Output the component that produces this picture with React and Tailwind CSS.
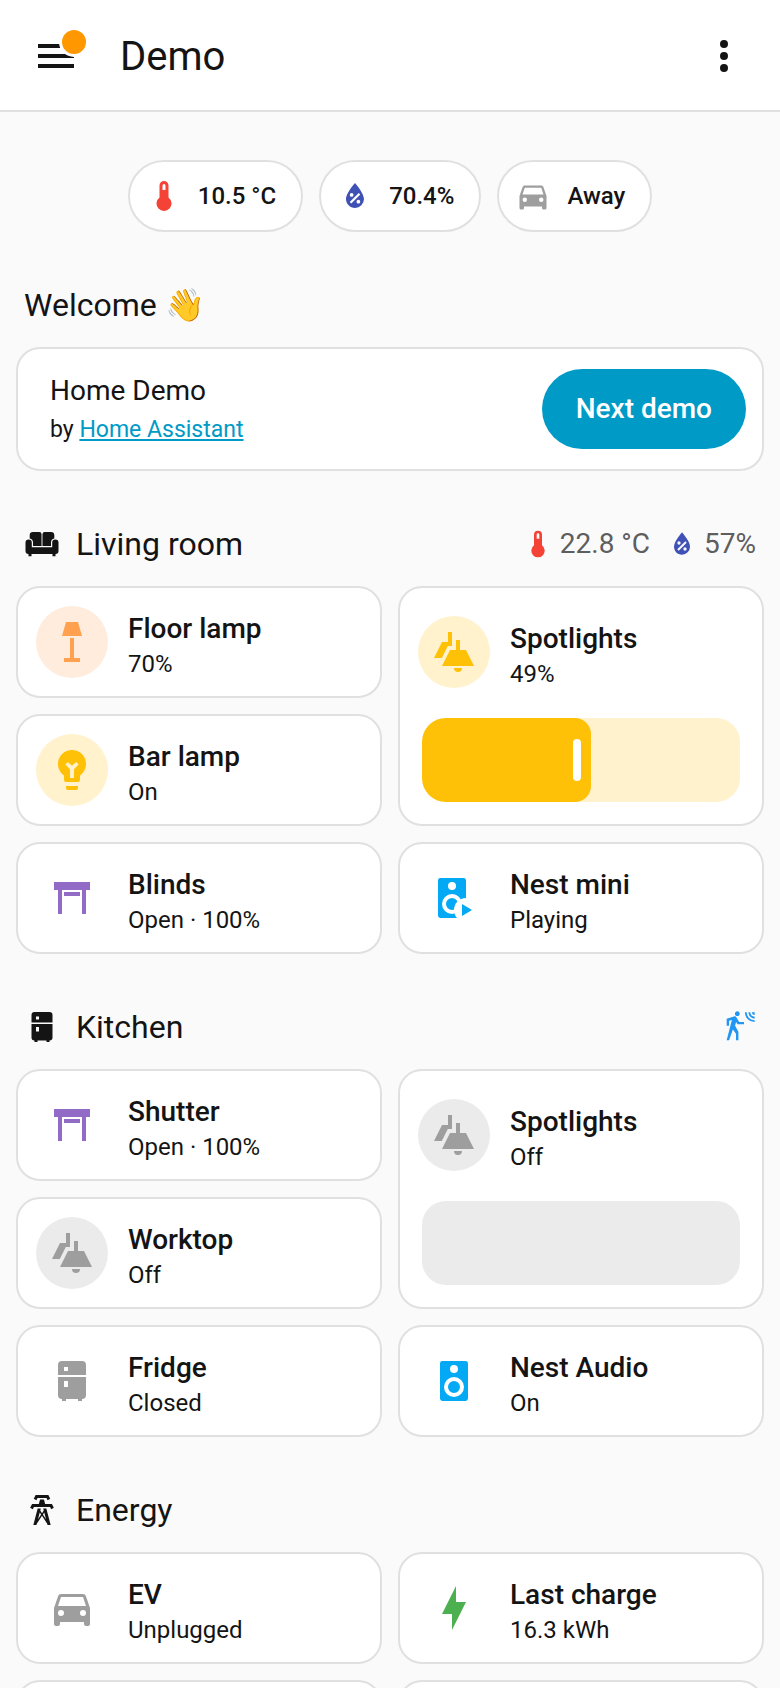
import React, { useState } from 'react'

// 24x24 glyphs, filled with the even-odd rule so inner shapes become holes
const icons = {
  thermometer:
    'M15 13V5A3 3 0 0 0 9 5V13A5 5 0 1 0 15 13M12 4A1 1 0 0 1 13 5V8H11V5A1 1 0 0 1 12 4Z',
  humidity:
    'M12 3.25C12 3.25 6 10 6 14C6 17.32 8.69 20 12 20A6 6 0 0 0 18 14C18 10 12 3.25 12 3.25M14.47 9.97L15.53 11.03L9.53 17.03L8.47 15.97M9.75 10A1.25 1.25 0 0 1 11 11.25A1.25 1.25 0 0 1 9.75 12.5A1.25 1.25 0 0 1 8.5 11.25A1.25 1.25 0 0 1 9.75 10M14.25 14.5A1.25 1.25 0 0 1 15.5 15.75A1.25 1.25 0 0 1 14.25 17A1.25 1.25 0 0 1 13 15.75A1.25 1.25 0 0 1 14.25 14.5Z',
  car: 'M5 11L6.5 6.5H17.5L19 11M17.5 16A1.5 1.5 0 0 1 16 14.5A1.5 1.5 0 0 1 17.5 13A1.5 1.5 0 0 1 19 14.5A1.5 1.5 0 0 1 17.5 16M6.5 16A1.5 1.5 0 0 1 5 14.5A1.5 1.5 0 0 1 6.5 13A1.5 1.5 0 0 1 8 14.5A1.5 1.5 0 0 1 6.5 16M18.92 6C18.72 5.42 18.16 5 17.5 5H6.5C5.84 5 5.28 5.42 5.08 6L3 12V20A1 1 0 0 0 4 21H5A1 1 0 0 0 6 20V19H18V20A1 1 0 0 0 19 21H20A1 1 0 0 0 21 20V12L18.92 6Z',
  sofa: 'M6 4H10.2A1.5 1.5 0 0 1 11.7 5.5V13.4H6V11A2.8 2.8 0 0 0 3.8 8.3V6.2A2.2 2.2 0 0 1 6 4M13.8 4H18A2.2 2.2 0 0 1 20.2 6.2V8.3A2.8 2.8 0 0 0 18 11V13.4H12.3V5.5A1.5 1.5 0 0 1 13.8 4M3.1 9A2.1 2 0 0 1 5.2 11V14.2H18.8V11A2.1 2 0 0 1 23 11V16.7A2 2 0 0 1 21 18.7V20.2H19V18.7H5V20.2H3V18.7A2 2 0 0 1 1 16.7V11A2.1 2 0 0 1 3.1 9Z',
  fridge:
    'M7 2H17A2 2 0 0 1 19 4V9H5V4A2 2 0 0 1 7 2M19 19A2 2 0 0 1 17 21V22H15V21H9V22H7V21A2 2 0 0 1 5 19V10H19V19M8 5V7H10V5H8M8 12V15H10V12H8Z',
  tower:
    'M8.28 5.45L6.5 4.55L7.76 2H16.23L17.5 4.55L15.72 5.44L15 4H9L8.28 5.45M18.62 8H14.09L13.3 5H10.7L9.91 8H5.38L4.1 10.55L5.89 11.44L6.62 10H17.38L18.1 11.45L19.89 10.56L18.62 8M17.77 22H15.7L15.46 21.1L12 15.9L8.53 21.1L8.3 22H6.23L9.12 11H11.19L10.83 12.35L12 14.1L13.16 12.35L12.81 11H14.88L17.77 22M11.4 15L10.5 13.65L9.32 18.13L11.4 15M14.68 18.12L13.5 13.64L12.6 15L14.68 18.12Z',
  motion:
    'M10 .2C9 .2 8.2 1 8.2 2C8.2 3 9 3.8 10 3.8C11 3.8 11.8 3 11.8 2C11.8 1 11 .2 10 .2M15.67 1A7.33 7.33 0 0 0 23 8.33V7A6 6 0 0 1 17 1H15.67M18.33 1C18.33 3.58 20.42 5.67 23 5.67V4.33C21.16 4.33 19.67 2.84 19.67 1H18.33M21 1A2 2 0 0 0 23 3V1H21M7.92 4.03C7.75 4.03 7.58 4.06 7.42 4.11L2 5.8V11H3.8V7.33L5.91 6.67L2 22H3.8L6.67 13.89L9 17V22H10.8V15.59L8.31 11.05L9.04 8.18L10.12 10H15V8.2H11.38L9.38 4.87C9.08 4.37 8.54 4.03 7.92 4.03Z',
  floorLamp: 'M9 2H15L17 9H7L9 2M11 10H13V20H16V22H8V20H11V10Z',
  bulb: 'M12 2A7 7 0 0 0 5 9C5 11.38 6.19 13.47 8 14.74V17A1 1 0 0 0 9 18H15A1 1 0 0 0 16 17V14.74C17.81 13.47 19 11.38 19 9A7 7 0 0 0 12 2M9.9 8L12 9.9L14.1 8L15.3 9.3L13 11.6V16H11V11.6L8.7 9.3L9.9 8M9 20H15V21A1 1 0 0 1 14 22H10A1 1 0 0 1 9 21V20Z',
  shutter: 'M3 4H21V8H19V20H17V8H7V20H5V8H3V4M8 9H16V11H8V9Z',
  spots:
    'M9 2H11V9H8.9L5.9 15H2L6 7H9V2M13 6H15V11H18L22 19H6L10 11H13V6M12 20H16A2 2 0 0 1 12 20Z',
  speaker:
    'M12 12A3 3 0 0 0 9 15A3 3 0 0 0 12 18A3 3 0 0 0 15 15A3 3 0 0 0 12 12M12 20A5 5 0 0 1 7 15A5 5 0 0 1 12 10A5 5 0 0 1 17 15A5 5 0 0 1 12 20M12 4A2 2 0 0 1 14 6A2 2 0 0 1 12 8A2 2 0 0 1 10 6A2 2 0 0 1 12 4M17.8 2H6.2A1.2 1.2 0 0 0 5 3.2V20.8A1.2 1.2 0 0 0 6.2 22H17.8A1.2 1.2 0 0 0 19 20.8V3.2A1.2 1.2 0 0 0 17.8 2Z',
  bolt: 'M11 15H6L13 1V9H18L11 23V15Z',
  menu: 'M3 6H21V8H3V6M3 11H21V13H3V11M3 16H21V18H3V16Z',
  dots: 'M12 16A2 2 0 1 1 12 20A2 2 0 1 1 12 16M12 10A2 2 0 1 1 12 14A2 2 0 1 1 12 10M12 4A2 2 0 1 1 12 8A2 2 0 1 1 12 4Z',
}

const Icon = ({ name, className }) => {
  if (name === 'speakerPlay') {
    return (
      <svg viewBox="0 0 24 24" className={className} fill="currentColor" aria-hidden="true">
        <rect x="4" y="2" width="14" height="20" rx="1.2" />
        <circle cx="11" cy="6" r="2" fill="#fff" />
        <circle cx="11" cy="15" r="4" fill="none" stroke="#fff" strokeWidth="2" />
        <circle cx="18" cy="18" r="6" fill="#fff" />
        <path d="M16 15V21L21 18Z" />
      </svg>
    )
  }
  return (
    <svg viewBox="0 0 24 24" className={className} fill="currentColor" aria-hidden="true">
      <path fillRule="evenodd" d={icons[name]} />
    </svg>
  )
}

const Header = () => (
  <header className="flex h-28 shrink-0 items-center border-b-2 border-[#e0e0e0] bg-white px-8 pt-0.5">
    <button type="button" aria-label="Menu" className="relative">
      <Icon name="menu" className="size-12" />
      <span className="absolute -top-[5px] -right-[9px] size-[30px] rounded-full border-3 border-white bg-[#ff9800]" />
    </button>
    <h1 className="ml-10 flex-1 pt-0.5 text-[40px] leading-[48px]">Demo</h1>
    <button type="button" aria-label="More options">
      <Icon name="dots" className="size-12" />
    </button>
  </header>
)

const Chip = ({ icon, color, children }) => (
  <button
    type="button"
    className="flex h-18 items-center gap-4 rounded-full border-2 border-[#e0e0e0] bg-white pr-[25px] pl-4 text-2xl font-medium"
  >
    <Icon name={icon} className={`size-9 ${color}`} />
    {children}
  </button>
)

const Reading = ({ icon, color, children }) => (
  <span className="flex items-center gap-1.5">
    <Icon name={icon} className={`size-8 ${color}`} />
    {children}
  </span>
)

const Section = ({ icon, title, readings, children }) => (
  <section>
    <div className="flex h-[115px] items-center gap-4 px-2 pt-[30px]">
      {icon && <Icon name={icon} className="size-9" />}
      <h2 className="flex-1 text-[32px] leading-10">{title}</h2>
      <div className="flex gap-4 text-[28px] leading-10 text-[#5e5e5e]">{readings}</div>
    </div>
    {children}
  </section>
)

const TileInfo = ({ icon, color, name, state }) => (
  <div className="flex items-center gap-5 px-[18px]">
    <span className={`flex size-18 shrink-0 items-center justify-center rounded-full ${color}`}>
      <Icon name={icon} className="size-12" />
    </span>
    <div className="pt-0.5">
      <h3 className="text-[28px] leading-[42px] font-medium">{name}</h3>
      <p className="text-2xl leading-7">{state}</p>
    </div>
  </div>
)

const Tile = (props) => (
  <article className="flex h-28 flex-col justify-center rounded-3xl border-2 border-[#e0e0e0] bg-white">
    {props.name && <TileInfo {...props} />}
  </article>
)

const LightTile = ({ brightness, track, ...info }) => {
  const [value, setValue] = useState(brightness)

  return (
    <article className="row-span-2 flex flex-col justify-between rounded-3xl border-2 border-[#e0e0e0] bg-white pt-7 pb-[22px]">
      <TileInfo {...info} state={value > 0 ? `${value}%` : 'Off'} />
      <div className={`relative mx-[22px] h-21 overflow-hidden rounded-3xl ${track}`}>
        {value > 0 && (
          <div
            className="flex h-full items-center justify-end rounded-r-2xl bg-[#ffc107] pr-2.5"
            style={{ width: `calc(${value}% + ${(100 - value) / 4}px)` }}
          >
            <span className="h-[42px] w-2 rounded-full bg-white" />
          </div>
        )}
        <input
          type="range"
          aria-label={`${info.name} brightness`}
          value={value}
          onChange={(e) => setValue(Number(e.target.value))}
          className="absolute inset-0 size-full cursor-pointer opacity-0"
        />
      </div>
    </article>
  )
}

const off = 'bg-[#ebebeb] text-[#9e9e9e]'
const amber = 'bg-[#fff2cd] text-[#ffc107]'

function App() {
  return (
    <div className="flex h-screen flex-col overflow-hidden bg-[#fafafa] font-['Roboto',sans-serif] text-[#141414]">
      <Header />
      <main className="px-4 pt-12">
        <div className="flex justify-center gap-4">
          <Chip icon="thermometer" color="text-[#f44336]">10.5 °C</Chip>
          <Chip icon="humidity" color="text-[#3f51b5]">70.4%</Chip>
          <Chip icon="car" color="text-[#9e9e9e]">Away</Chip>
        </div>

        <Section title="Welcome 👋">
          <article className="flex items-center justify-between rounded-3xl border-2 border-[#e0e0e0] bg-white py-5 pr-4 pl-8">
            <div className="pt-0.5">
              <h3 className="text-[28px] leading-10">Home Demo</h3>
              <p className="text-[23px] leading-[38px]">
                by{' '}
                <a href="#home-assistant" className="text-[#009ac7] underline">
                  Home Assistant
                </a>
              </p>
            </div>
            <button
              type="button"
              className="h-20 rounded-full bg-[#009ac7] px-[34px] text-[28px] font-medium text-white"
            >
              Next demo
            </button>
          </article>
        </Section>

        <Section
          icon="sofa"
          title="Living room"
          readings={
            <>
              <Reading icon="thermometer" color="text-[#f44336]">22.8 °C</Reading>
              <Reading icon="humidity" color="text-[#3f51b5]">57%</Reading>
            </>
          }
        >
          <div className="grid grid-cols-2 gap-4">
            <Tile icon="floorLamp" color="bg-[#ffecdd] text-[#ffa14f]" name="Floor lamp" state="70%" />
            <LightTile icon="spots" color={amber} name="Spotlights" brightness={49} track="bg-[#fff2cd]" />
            <Tile icon="bulb" color={amber} name="Bar lamp" state="On" />
            <Tile icon="shutter" color="text-[#926bc7]" name="Blinds" state="Open · 100%" />
            <Tile icon="speakerPlay" color="text-[#03a9f4]" name="Nest mini" state="Playing" />
          </div>
        </Section>

        <Section
          icon="fridge"
          title="Kitchen"
          readings={<Reading icon="motion" color="text-[#2196f3]" />}
        >
          <div className="grid grid-cols-2 gap-4">
            <Tile icon="shutter" color="text-[#926bc7]" name="Shutter" state="Open · 100%" />
            <LightTile icon="spots" color={off} name="Spotlights" brightness={0} track="bg-[#ebebeb]" />
            <Tile icon="spots" color={off} name="Worktop" state="Off" />
            <Tile icon="fridge" color="text-[#9e9e9e]" name="Fridge" state="Closed" />
            <Tile icon="speaker" color="text-[#03a9f4]" name="Nest Audio" state="On" />
          </div>
        </Section>

        <Section icon="tower" title="Energy">
          <div className="grid grid-cols-2 gap-4">
            <Tile icon="car" color="text-[#9e9e9e]" name="EV" state="Unplugged" />
            <Tile icon="bolt" color="text-[#4caf50]" name="Last charge" state="16.3 kWh" />
            <Tile />
            <Tile />
          </div>
        </Section>
      </main>
    </div>
  )
}

export default App
